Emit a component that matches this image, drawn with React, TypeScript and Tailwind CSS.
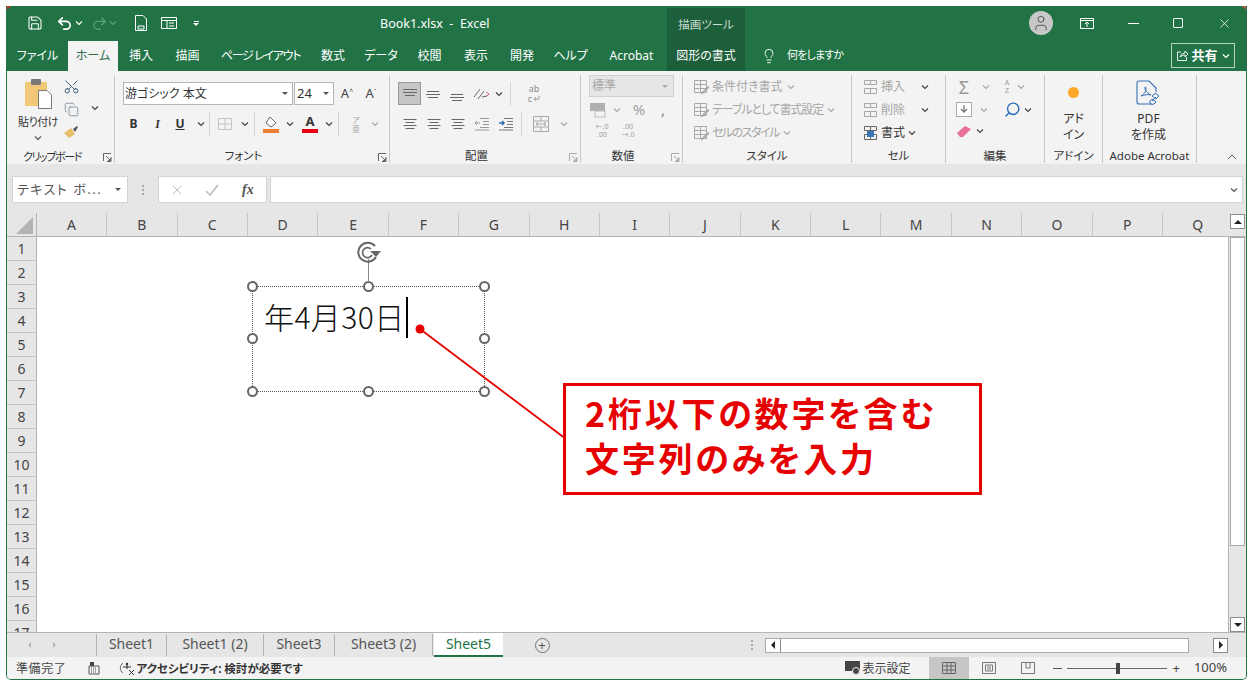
import React from "react";
import { Copy, Lightbulb, Redo2, Save, Scissors, Search, Undo2, User, X } from "lucide-react";

const columns = ["A", "B", "C", "D", "E", "F", "G", "H", "I", "J", "K", "L", "M", "N", "O", "P", "Q"];
const rows = Array.from({ length: 17 }, (_, i) => i + 1);
const topTabs = [
  { label: "ファイル", w: "w-[61px]" },
  { label: "ホーム", w: "w-[50px]", active: true },
  { label: "挿入", w: "w-[46px]" },
  { label: "描画", w: "w-[47px]" },
  { label: "ページ レイアウト", w: "w-[99px]", tight: true },
  { label: "数式", w: "w-[46px]" },
  { label: "データ", w: "w-[50px]" },
  { label: "校閲", w: "w-[47px]" },
  { label: "表示", w: "w-[46px]" },
  { label: "開発", w: "w-[46px]" },
  { label: "ヘルプ", w: "w-[51px]" },
  { label: "Acrobat", w: "w-[71px]" },
];
const sheets = [
  { name: "Sheet1", w: "w-[70px]" },
  { name: "Sheet1 (2)", w: "w-[97px]" },
  { name: "Sheet3", w: "w-[71px]" },
  { name: "Sheet3 (2)", w: "w-[98px]" },
];

function Chev({ className = "text-[#444]" }: { className?: string }) {
  return (
    <svg width="8" height="6" viewBox="0 0 8 6" className={className}>
      <path d="M1 1.5 4 4.5 7 1.5" fill="none" stroke="currentColor" strokeWidth="1.2" />
    </svg>
  );
}

function Lines({ widths, y, color = "#666" }: { widths: number[]; y: number[]; color?: string }) {
  return (
    <svg width="14" height="14" viewBox="0 0 14 14">
      {widths.map((w, i) => (
        <rect key={i} x={(14 - w) / 2} y={y[i]} width={w} height="1" fill={color} />
      ))}
    </svg>
  );
}

function Launcher({ gray }: { gray?: boolean }) {
  const c = gray ? "#aaa" : "#666";
  return (
    <svg width="9" height="9" viewBox="0 0 9 9">
      <path d="M.5 8V.5H8M8 4V8.5H4M3 3 7.5 7.5M5 7.5H7.5V5" fill="none" stroke={c} />
    </svg>
  );
}

function Group({ w, label, children, launcher, gray, labelClass = "text-[11.5px]" }: { w: string; label: string; children: React.ReactNode; launcher?: boolean; gray?: boolean; labelClass?: string }) {
  return (
    <div className={`${w} h-[88px] shrink-0 mt-[4px] border-r border-[#c8c8c8] relative flex flex-col`}>
      <div className="flex-1 min-h-0">{children}</div>
      <div className={`h-[18px] pt-[4px] flex items-center justify-center text-[#333] leading-none whitespace-nowrap ${launcher ? "pr-[17px]" : ""} ${labelClass}`}>{label}</div>
      {launcher && (
        <span className="absolute right-[2px] bottom-[1px] leading-none">
          <Launcher gray={gray} />
        </span>
      )}
    </div>
  );
}

function Sep() {
  return <div className="w-px h-[24px] bg-[#d4d4d4]" />;
}

function Handle({ className }: { className: string }) {
  return <div className={`absolute w-[11px] h-[11px] rounded-full bg-white border-2 border-[#666] ${className}`} />;
}

function GrayRow({ icon, label, chev, tight }: { icon: React.ReactNode; label: string; chev?: boolean; tight?: string }) {
  return (
    <div className="h-[23px] flex items-center gap-[2px] text-[12px] text-[#a6a6a6] whitespace-nowrap">
      {icon}
      <span className={tight}>{label}</span>
      {chev && <Chev className="text-[#aaa] ml-[2px]" />}
    </div>
  );
}

function TableIcon({ color = "#a8a8a8" }: { color?: string }) {
  return (
    <svg width="17" height="16" viewBox="0 0 17 16">
      <path d="M1.5 1.5H13.5V13.5H1.5ZM1.5 5.5H13.5M1.5 9.5H13.5M7.5 1.5V13.5" fill="none" stroke={color} />
      <path d="M8 14 15 7l1.5 1.5-7 6.5H8Z" fill={color} />
    </svg>
  );
}

function CellIcon({ color = "#a8a8a8", mark }: { color?: string; mark?: boolean }) {
  return (
    <svg width="17" height="16" viewBox="0 0 17 16">
      <path d="M2.5 1.5H14.5V5.5H2.5ZM2.5 9.5H14.5V14.5H2.5ZM8.5 1.5V5.5M8.5 9.5V14.5" fill="none" stroke={color} />
      {mark && <rect x="5" y="6" width="7" height="6" fill="#3b77b8" />}
    </svg>
  );
}

function Ribbon() {
  return (
    <div className="h-[93px] bg-[#f3f3f3] flex shrink-0">
      <Group w="w-[108px]" label="クリップボード" launcher labelClass="text-[11px] tracking-[-1.4px]">
        <div className="flex pl-[10px] pt-[3px]">
          <div className="w-[42px] flex flex-col items-center">
            <svg width="29" height="31" viewBox="0 0 29 31">
              <rect x="1" y="4" width="22" height="24" fill="#f0c878" />
              <rect x="7" y="1" width="10" height="6" rx="1" fill="#777" />
              <path d="M14.5 12.5H23L27.5 17V30.5H14.5Z" fill="#fff" stroke="#777" />
            </svg>
            <span className="text-[11px] tracking-[-0.5px] leading-none mt-[7px] whitespace-nowrap text-[#333]">貼り付け</span>
            <Chev className="text-[#555] mt-[8px]" />
          </div>
          <div className="w-[16px] ml-[4px] flex flex-col items-center gap-[7px]">
            <Scissors size={17} strokeWidth={1.4} className="text-[#3f5f80] -rotate-90" />
            <Copy size={15} strokeWidth={1.1} className="text-[#5f7488]" />
            <svg width="16" height="14" viewBox="0 0 16 14" className="mt-[1px]">
              <path d="M1 8 8 3 12 9 6 13Z" fill="#e8bd68" />
              <path d="M10 4 14 1 15 2 12 7Z" fill="#555" />
            </svg>
          </div>
          <div className="ml-[12px] mt-[27px]">
            <Chev />
          </div>
        </div>
      </Group>

      <Group w="w-[275px]" label="フォント" launcher>
        <div className="pl-[8px] pt-[7px]">
          <div className="flex items-center h-[23px]">
            <div className="w-[170px] h-[23px] bg-white border border-[#b5b5b5] flex items-center justify-between pl-[1px] pr-[4px] text-[12px] text-[#333]">
              <span>游ゴシック 本文</span>
              <span className="w-0 h-0 border-x-[3px] border-x-transparent border-t-[3px] border-t-[#555]" />
            </div>
            <div className="w-[40px] ml-[1px] h-[23px] bg-white border border-[#b5b5b5] flex items-center justify-between pl-[2px] pr-[4px] text-[13px] text-[#333]">
              <span>24</span>
              <span className="w-0 h-0 border-x-[3px] border-x-transparent border-t-[3px] border-t-[#555]" />
            </div>
            <span className="w-[24px] ml-[1px] text-center text-[13px] text-[#444]">A<sup className="text-[7px]">^</sup></span>
            <span className="w-[24px] text-center text-[13px] text-[#444]">A<sup className="text-[7px]">ˇ</sup></span>
          </div>
          <div className="flex items-center h-[24px] mt-[7px] text-[#333]">
            <span className="w-[21px] text-center text-[12px] font-bold">B</span>
            <span className="w-[27px] text-center text-[12px] font-bold italic font-['Liberation_Serif',serif]">I</span>
            <span className="w-[18px] text-center text-[12px] font-bold underline">U</span>
            <span className="w-[17px] ml-[3px] flex justify-center"><Chev /></span>
            <span className="w-[6px]"><Sep /></span>
            <span className="w-[20px] flex justify-center">
              <svg width="16" height="14" viewBox="0 0 16 14">
                <path d="M1.5 1.5H14.5V12.5H1.5ZM8 1.5V12.5M1.5 7H14.5" fill="none" stroke="#c4c4c4" />
              </svg>
            </span>
            <span className="w-[19px] flex justify-center"><Chev /></span>
            <span className="w-[7px]"><Sep /></span>
            <span className="w-[20px] flex justify-center">
              <svg width="18" height="17" viewBox="0 0 18 17">
                <path d="M8 1 14 7 9 11 4 7Z" fill="#fff" stroke="#666" />
                <rect x="1" y="13" width="16" height="4" fill="#ed7d31" />
              </svg>
            </span>
            <span className="w-[18px] flex justify-center"><Chev /></span>
            <span className="w-[1px]" />
            <span className="w-[20px] flex flex-col items-center text-[13px] font-bold leading-[13px] text-[#333]">
              A<span className="w-[16px] h-[4px] bg-[#e60012] mt-[1px]" />
            </span>
            <span className="w-[18px] flex justify-center"><Chev /></span>
            <span className="w-[7px]"><Sep /></span>
            <span className="w-[22px] text-center text-[8px] leading-[9px] text-[#aaa]">ア<br />亜</span>
            <span className="w-[16px] flex justify-center"><Chev className="text-[#aaa]" /></span>
          </div>
        </div>
      </Group>

      <Group w="w-[191px]" label="配置" launcher gray>
        <div className="pl-[8px] pt-[7px]">
          <div className="flex items-center h-[23px]">
            <span className="w-[23px] h-[23px] bg-[#c6c6c6] border border-[#9a9a9a] flex items-center justify-center"><Lines widths={[14, 14, 10]} y={[2, 5, 8]} /></span>
            <span className="w-[24px] flex justify-center"><Lines widths={[12, 14, 10]} y={[4, 7, 10]} /></span>
            <span className="w-[24px] flex justify-center"><Lines widths={[12, 14, 10]} y={[7, 10, 13]} /></span>
            <span className="w-[24px] flex justify-center">
              <svg width="18" height="16" viewBox="0 0 18 16">
                <path d="M2 11 8 3M6 13l6-8M10 11l5-1" stroke="#666" fill="none" />
                <path d="M14 6l3 2-2 2" stroke="#c05a9a" fill="none" />
              </svg>
            </span>
            <span className="w-[12px] flex justify-center"><Chev /></span>
            <span className="w-[14px] ml-[5px]"><Sep /></span>
            <span className="w-[30px] -ml-[5px] flex flex-col items-center text-[9px] leading-[10px] text-[#888]">
              <span>ab</span>
              <span className="flex items-center gap-[1px]">
                c
                <svg width="7" height="6" viewBox="0 0 7 6"><path d="M6 0V3H1M3 1 1 3 3 5" fill="none" stroke="#888" strokeWidth=".8" /></svg>
              </span>
            </span>
          </div>
          <div className="flex items-center h-[24px] mt-[7px]">
            <span className="w-[24px] flex justify-center"><Lines widths={[13, 9, 13, 9]} y={[2, 5, 8, 11]} /></span>
            <span className="w-[24px] flex justify-center"><Lines widths={[13, 9, 13, 9]} y={[2, 5, 8, 11]} /></span>
            <span className="w-[24px] flex justify-center"><Lines widths={[13, 9, 13, 9]} y={[2, 5, 8, 11]} /></span>
            <span className="w-[24px] flex justify-center">
              <svg width="16" height="14" viewBox="0 0 16 14"><path d="M6 1.5H15M9 4.5H15M9 7.5H15M6 10.5H15M1 13H15M1 6H6M3 4 1 6 3 8" fill="none" stroke="#999" /></svg>
            </span>
            <span className="w-[24px] flex justify-center">
              <svg width="16" height="14" viewBox="0 0 16 14"><path d="M6 1.5H15M9 4.5H15M9 7.5H15M6 10.5H15M1 13H15" fill="none" stroke="#777" /><path d="M1 6H6M4 4 6 6 4 8" fill="none" stroke="#2f6db5" strokeWidth="1.5" /></svg>
            </span>
            <span className="w-[9px] ml-[3px]"><Sep /></span>
            <span className="w-[22px] flex justify-center">
              <svg width="16" height="16" viewBox="0 0 16 16"><path d="M.5.5H15.5V15.5H.5ZM.5 5H15.5M.5 11H15.5M8 .5V5M8 11V15.5M3 8H13M5 6 3 8 5 10M11 6l2 2-2 2" fill="none" stroke="#a8a8a8" /></svg>
            </span>
            <span className="w-[23px] flex justify-center"><Chev className="text-[#aaa]" /></span>
          </div>
        </div>
      </Group>

      <Group w="w-[102px]" label="数値" launcher gray>
        <div className="pl-[8px]">
          <div className="w-[85px] h-[22px] bg-[#e6e6e6] border border-[#d0d0d0] flex items-center justify-between pl-[2px] pr-[5px] text-[12px] text-[#a6a6a6]">
            <span>標準</span>
            <span className="w-0 h-0 border-x-[3px] border-x-transparent border-t-[3px] border-t-[#aaa]" />
          </div>
          <div className="flex items-center h-[23px] mt-[1px]">
            <svg width="18" height="16" viewBox="0 0 18 16"><rect x="1" y="1" width="15" height="8" fill="#b0b0b0" /><rect x="6" y="9" width="10" height="6" fill="none" stroke="#bbb" /></svg>
            <span className="w-[20px] flex justify-center"><Chev className="text-[#aaa]" /></span>
            <span className="w-[24px] text-center text-[15px] text-[#a0a0a0] leading-none">%</span>
            <span className="w-[24px] text-center text-[14px] font-bold text-[#a0a0a0] leading-none">,</span>
          </div>
          <div className="flex items-start h-[20px] mt-[2px] text-[7px] leading-[8px] text-[#a0a0a0] text-center">
            <span className="w-[26px]">←.0<br />.00</span>
            <span className="w-[26px]">.00<br />→.0</span>
          </div>
        </div>
      </Group>

      <Group w="w-[169px]" label="スタイル">
        <div className="pl-[10px]">
          <GrayRow icon={<TableIcon />} label="条件付き書式" chev />
          <GrayRow icon={<TableIcon />} label="テーブルとして書式設定" chev tight="tracking-[-1.1px]" />
          <GrayRow icon={<TableIcon />} label="セルのスタイル" chev tight="tracking-[-1.5px]" />
        </div>
      </Group>

      <Group w="w-[94px]" label="セル">
        <div className="pl-[10px]">
          <div className="flex items-center">
            <div className="w-[59px]"><GrayRow icon={<CellIcon />} label="挿入" /></div>
            <Chev />
          </div>
          <div className="flex items-center">
            <div className="w-[59px]"><GrayRow icon={<CellIcon />} label="削除" /></div>
            <Chev />
          </div>
          <div className="h-[23px] flex items-center gap-[2px] text-[12px] text-[#333]">
            <CellIcon color="#666" mark />
            <span>書式</span>
            <Chev className="text-[#444] ml-[1px]" />
          </div>
        </div>
      </Group>

      <Group w="w-[99px]" label="編集">
        <div className="pl-[10px]">
          <div className="h-[23px] flex items-center">
            <span className="w-[16px] text-[18px] leading-none text-[#999] text-center">Σ</span>
            <span className="w-[28px] flex justify-center"><Chev className="text-[#aaa]" /></span>
            <span className="w-[14px] flex flex-col items-center text-[7px] leading-[8px] text-[#999]">
              <span>A</span>
              <span>Z</span>
            </span>
            <span className="w-[14px] flex justify-center"><Chev className="text-[#aaa]" /></span>
          </div>
          <div className="h-[23px] flex items-center">
            <svg width="16" height="15" viewBox="0 0 16 15"><rect x=".5" y=".5" width="15" height="14" fill="#fff" stroke="#aaa" /><path d="M8 3V10M5 7l3 3 3-3" fill="none" stroke="#777" strokeWidth="1.3" /></svg>
            <span className="w-[24px] flex justify-center"><Chev className="text-[#aaa]" /></span>
            <Search size={17} strokeWidth={2} className="text-[#2e6fb7] -scale-x-100 ml-[8px]" />
            <span className="ml-[3px]"><Chev /></span>
          </div>
          <div className="h-[23px] flex items-center -mt-[2px]">
            <svg width="16" height="14" viewBox="0 0 16 14"><path d="M1 9 9 2 15 5 7 13H4Z" fill="#e8719a" /></svg>
            <span className="ml-[4px]"><Chev /></span>
          </div>
        </div>
      </Group>

      <Group w="w-[58px]" label="アドイン">
        <div className="flex flex-col items-center pt-[12px]">
          <span className="w-[11px] h-[11px] rounded-full bg-[#ffa726]" />
          <span className="text-[12px] leading-[16px] mt-[13px] text-[#333] text-center">アド<br />イン</span>
        </div>
      </Group>

      <Group w="w-[94px]" label="Adobe Acrobat">
        <div className="flex flex-col items-center pt-[5px] pr-[2px]">
          <svg width="28" height="28" viewBox="0 0 28 28">
            <path d="M17 24H4Q2 24 2 22V3Q2 1 4 1H14L21 8V12" fill="none" stroke="#3470b5" strokeWidth="1.1" />
            <path d="M6 16C10 14 12 9 10.500 7 9 7 10 12 16 15 13 14 9 15 6 16Z" fill="none" stroke="#3470b5" />
            <path d="M17 21 21 17M15 23a3 3 0 0 0 4 1l2-2-4-3-2 2Q14 22 15 23ZM23 15a3 3 0 0 0-4-1l-2 2 4 3 2-2Q24 16 23 15Z" fill="none" stroke="#3470b5" />
          </svg>
          <span className="text-[12px] leading-[16px] mt-[3px] text-[#333] text-center">PDF<br />を作成</span>
        </div>
      </Group>

      <div className="flex-1 flex items-end justify-end pr-[9px] pb-[4px]">
        <svg width="10" height="6" viewBox="0 0 10 6"><path d="M1 5 5 1 9 5" fill="none" stroke="#555" /></svg>
      </div>
    </div>
  );
}

export default function App() {
  return (
    <div className="w-[1253px] h-[686px] bg-white pt-[6px] px-[6px] overflow-hidden font-['Noto_Sans','Noto_Sans_CJK_JP',sans-serif] [font-feature-settings:'palt']">
      <div className="w-[1241px] h-[674px] relative flex flex-col overflow-hidden rounded-b-[5px] border-x border-b border-[#217346] bg-[#e6e6e6]">
        {/* title bar */}
        <div className="h-[34px] bg-[#217346] flex items-center text-white shrink-0 relative">
          <span className="absolute left-0 top-0 w-0 h-0 border-r-[4px] border-r-transparent border-t-[4px] border-t-[#c0392b]" />
          <span className="absolute right-0 top-0 w-0 h-0 border-l-[4px] border-l-transparent border-t-[4px] border-t-[#b5584a]" />
          <div className="flex items-center pl-[20px] w-[370px]">
            <Save size={16} strokeWidth={1.6} />
            <Undo2 size={17} strokeWidth={2.4} className="ml-[13px]" />
            <span className="ml-[2px]"><Chev className="text-white" /></span>
            <Redo2 size={17} strokeWidth={2} className="ml-[8px] text-[#5e9d7c]" />
            <span className="ml-[1px]"><Chev className="text-[#5e9d7c]" /></span>
            <svg width="14" height="16" viewBox="0 0 14 16" className="ml-[17px]"><path d="M1.500.5H9L12.500 4V15.500H1.500ZM4 11H10V14H4Z" fill="none" stroke="#fff" /></svg>
            <svg width="16" height="14" viewBox="0 0 16 14" className="ml-[13px]"><path d="M.5 1.500H15.500V12.500H.5ZM.5 4.500H15.500M6 4.500V12.500M8 7H13M8 10H13" fill="none" stroke="#fff" /></svg>
            <span className="ml-[16px] flex flex-col items-center gap-[1px]"><span className="w-[5px] h-px bg-white" /><span className="w-0 h-0 border-x-[3px] border-x-transparent border-t-[3px] border-t-white" /></span>
          </div>
          <span className="text-[12.5px] ml-[3px] pt-[3px]">Book1.xlsx&nbsp; - &nbsp;Excel</span>
          <div className="absolute left-[660px] top-[2px] w-[78px] h-[32px] pt-[2px] bg-[#1e5f3b] flex items-center justify-center text-[11.5px] text-[#c9ddd0]">描画ツール</div>
          <div className="ml-auto flex items-center">
            <span className="w-[24px] h-[24px] rounded-full bg-[#c8c8c8] flex items-center justify-center text-[#555]"><User size={18} strokeWidth={1.3} /></span>
            <svg width="14" height="11" viewBox="0 0 14 11" className="ml-[27px]"><path d="M.5.5H13.500V10.500H.5ZM.5 2.500H13.500M7 9V4.500M5 6 7 4 9 6" fill="none" stroke="#fff" /></svg>
            <span className="w-[11px] h-px bg-white ml-[34px]" />
            <span className="w-[10px] h-[10px] border border-white rounded-[1px] ml-[34px]" />
            <X size={15} strokeWidth={1.2} className="ml-[34px] mr-[14px]" />
          </div>
        </div>

        {/* tab row */}
        <div className="h-[31px] bg-[#217346] flex items-stretch text-white text-[12px] shrink-0 relative">
          {topTabs.map((t) => (
            <div key={t.label} className={`${t.w} flex items-center justify-center whitespace-nowrap ${t.active ? "bg-[#f3f3f3] text-[#2f6b4a] mt-[1px]" : ""} ${t.tight ? "tracking-[-1.3px]" : ""}`}>
              {t.label}
            </div>
          ))}
          <div className="w-[78px] bg-[#1e5f3b] flex items-center justify-center">図形の書式</div>
          <div className="flex items-center ml-[16px] gap-[10px]">
            <Lightbulb size={16} strokeWidth={1.4} />
            <span className="text-[11px] tracking-[-0.8px]">何をしますか</span>
          </div>
          <div className="ml-auto mr-[11px] my-[3px] w-[64px] border border-[#b9d3c3] flex items-center justify-center gap-[2px] text-[13px] font-bold">
            <svg width="13" height="13" viewBox="0 0 13 13"><path d="M5 3H1.500V11.500H10.500V8M4 8Q5 4 9 4V2L12 5 9 8V6Q6 6 4 8Z" fill="none" stroke="#fff" strokeWidth=".9" /></svg>
            共有
            <Chev className="text-white ml-[2px]" />
          </div>
        </div>

        <Ribbon />

        {/* formula bar */}
        <div className="h-[44px] bg-[#e6e6e6] flex items-end pb-[5px] pl-[5px] shrink-0">
          <div className="w-[116px] h-[27px] bg-white border border-[#d4d4d4] flex items-center justify-between pl-[4px] pr-[6px] text-[13px] text-[#555] tracking-[1.5px] whitespace-nowrap">
            <span>テキスト ボ...</span>
            <span className="w-0 h-0 border-x-[3px] border-x-transparent border-t-[3px] border-t-[#555]" />
          </div>
          <div className="w-[30px] h-[27px] flex flex-col items-center justify-center gap-[2px]">
            <span className="w-[2px] h-[2px] bg-[#aaa]" />
            <span className="w-[2px] h-[2px] bg-[#aaa]" />
            <span className="w-[2px] h-[2px] bg-[#aaa]" />
          </div>
          <div className="w-[109px] h-[27px] bg-white border border-[#d4d4d4] flex items-center text-[#aaa]">
            <X size={16} strokeWidth={1.2} className="ml-[10px]" />
            <svg width="14" height="12" viewBox="0 0 14 12" className="ml-[20px]"><path d="M1 7 5 11 13 1" fill="none" stroke="#b8b8b8" strokeWidth="1.5" /></svg>
            <span className="ml-[23px] text-[14px] italic font-bold font-['Liberation_Serif',serif] text-[#555]">fx</span>
          </div>
          <div className="ml-[3px] w-[973px] h-[27px] bg-white border border-[#d4d4d4] flex items-center justify-end pr-[4px]">
            <Chev className="text-[#555]" />
          </div>
        </div>

        {/* column headers */}
        <div className="h-[24px] bg-[#e6e6e6] flex shrink-0 border-b border-[#b4b4b4] mt-[5px] relative">
          <div className="w-[29.800px] shrink-0 border-r border-[#b4b4b4] flex items-end justify-end pb-[2px] pr-[3px]">
            <span className="w-0 h-0 border-l-[17px] border-l-transparent border-b-[17px] border-b-[#b4b4b4]" />
          </div>
          {columns.map((c) => (
            <div key={c} className="w-[70.400px] shrink-0 border-r border-[#c6c6c6] flex items-center justify-center text-[14px] text-[#444]">
              {c}
            </div>
          ))}
          <div className="absolute right-0 top-0 bottom-0 w-[18px] bg-[#e6e6e6] border-l border-[#e6e6e6] flex items-start justify-center">
            <div className="w-[15px] h-[15px] mt-[1px] bg-white border border-[#8c8c8c] flex items-center justify-center">
              <span className="w-0 h-0 border-x-[4px] border-x-transparent border-b-[4px] border-b-[#222]" />
            </div>
          </div>
        </div>

        {/* sheet */}
        <div className="flex-1 min-h-0 flex relative">
          <div className="w-[30px] shrink-0 overflow-hidden bg-[#e6e6e6] border-r border-[#b4b4b4]">
            {rows.map((r) => (
              <div key={r} className="h-[24px] border-b border-[#c6c6c6] flex items-center justify-center text-[14px] text-[#444]">
                {r}
              </div>
            ))}
          </div>
          <div className="flex-1 bg-white" />
          <div className="w-[18px] shrink-0 bg-[#e6e6e6] border-l border-[#b4b4b4] flex flex-col items-center">
            <div className="w-[15px] h-[309px] bg-white border border-[#a8a8a8]" />
            <div className="mt-auto w-[15px] h-[15px] bg-white border border-[#8c8c8c] flex items-center justify-center">
              <span className="w-0 h-0 border-x-[4px] border-x-transparent border-t-[4px] border-t-[#222]" />
            </div>
          </div>

          {/* shape on the sheet */}
          <div className="absolute left-[245px] top-[49px] w-[233px] h-[106px] border border-dotted border-[#555]">
            <div className="absolute left-[11px] top-[7px] text-[30px] leading-[44px] font-light tracking-[0.4px] text-[#111] whitespace-nowrap font-['Noto_Sans_CJK_JP',sans-serif] [font-feature-settings:'normal']">年4月30日</div>
            <div className="absolute left-[153px] top-[10px] w-[1.500px] h-[41px] bg-black" />
            <Handle className="-left-[6px] -top-[6px]" />
            <Handle className="left-[110px] -top-[6px]" />
            <Handle className="-right-[6px] -top-[6px]" />
            <Handle className="-left-[6px] top-[46px]" />
            <Handle className="-right-[6px] top-[46px]" />
            <Handle className="-left-[6px] -bottom-[6px]" />
            <Handle className="left-[110px] -bottom-[6px]" />
            <Handle className="-right-[6px] -bottom-[6px]" />
            <div className="absolute left-[115px] -top-[28px] w-px h-[23px] bg-[#888]" />
            <svg width="28" height="24" viewBox="0 0 28 24" className="absolute left-[102px] -top-[46px]">
              <path d="M21 16A9.500 9.500 0 1 1 20 5" fill="none" stroke="#666" strokeWidth="2" />
              <path d="M17 14A5 5 0 1 1 16 8" fill="none" stroke="#666" strokeWidth="1.6" />
              <path d="M15 10H26L21 16Z" fill="#666" />
            </svg>
          </div>
          <svg width="160" height="125" viewBox="0 0 160 125" className="absolute left-[408px] top-[87px] overflow-visible">
            <circle cx="5" cy="5" r="4.500" fill="#e60000" />
            <path d="M5 5 151 115" stroke="#e60000" strokeWidth="1.800" fill="none" />
          </svg>
          <div className="absolute left-[556px] top-[146px] w-[419px] h-[112px] bg-white border-[3px] border-[#e60000] pl-[19px] pt-[4px] text-[#e60000] text-[34px] leading-[45px] font-bold tracking-[2.800px] whitespace-nowrap font-['Noto_Sans_CJK_JP',sans-serif] [font-feature-settings:'normal']">
            <div>2桁以下の数字を含む</div>
            <div>文字列のみを入力</div>
          </div>
        </div>

        {/* sheet tabs */}
        <div className="h-[25px] bg-[#e6e6e6] border-t border-[#b4b4b4] flex items-stretch shrink-0 text-[14px] text-[#555]">
          <div className="w-[90px] flex items-center pl-[21px] gap-[22px] border-r border-[#b4b4b4] my-[1px]">
            <span className="w-0 h-0 border-y-[3px] border-y-transparent border-r-[3px] border-r-[#b4b4b4]" />
            <span className="w-0 h-0 border-y-[3px] border-y-transparent border-l-[3px] border-l-[#b4b4b4]" />
          </div>
          {sheets.map((s) => (
            <div key={s.name} className={`${s.w} flex items-center justify-center border-r border-[#b4b4b4] my-[1px] pb-[3px] whitespace-nowrap`}>
              {s.name}
            </div>
          ))}
          <div className="w-[69px] ml-px bg-white border-b-2 border-[#217346] text-[#217346] flex items-center justify-center pb-[2px]">Sheet5</div>
          <div className="w-[78px] flex items-center justify-center">
            <span className="w-[15px] h-[15px] rounded-full border border-[#777] flex items-center justify-center text-[13px] leading-none">+</span>
          </div>
          <div className="ml-auto flex items-center pr-[18px]">
            <div className="flex flex-col gap-[2px] mr-[12px]">
              <span className="w-[2px] h-[2px] bg-[#aaa]" />
              <span className="w-[2px] h-[2px] bg-[#aaa]" />
              <span className="w-[2px] h-[2px] bg-[#aaa]" />
            </div>
            <div className="w-[424px] h-[15px] bg-white border border-[#a8a8a8] flex">
              <span className="w-[15px] border-r border-[#8c8c8c] flex items-center justify-center">
                <span className="w-0 h-0 border-y-[4px] border-y-transparent border-r-[4px] border-r-[#222]" />
              </span>
            </div>
            <div className="w-[24px]" />
            <div className="w-[15px] h-[15px] bg-white border border-[#8c8c8c] flex items-center justify-center">
              <span className="w-0 h-0 border-y-[4px] border-y-transparent border-l-[4px] border-l-[#222]" />
            </div>
          </div>
        </div>

        {/* status bar */}
        <div className="h-[22px] bg-[#f3f3f3] flex items-center shrink-0 text-[12px] text-[#444]">
          <span className="ml-[9px] pt-[2px] tracking-[0.6px]">準備完了</span>
          <svg width="12" height="13" viewBox="0 0 12 13" className="ml-[22px]"><path d="M1 4H11V12H1Z" fill="none" stroke="#555" /><rect x="2" y="0" width="4" height="4" fill="#444" /><path d="M3 6H9M3 8H9M3 10H9" stroke="#555" strokeDasharray="1 1" /></svg>
          <svg width="16" height="14" viewBox="0 0 16 14" className="ml-[19px]"><path d="M4 2a6 6 0 0 0 0 10" fill="none" stroke="#666" /><circle cx="8" cy="3" r="1.300" fill="#333" /><path d="M4 6H12M8 4V8M10 9 15 14M15 9 10 14" stroke="#333" fill="none" /></svg>
          <span className="ml-[1px] pt-[2px] font-bold text-[11.500px] text-[#333]">アクセシビリティ: 検討が必要です</span>
          <div className="ml-auto flex items-stretch h-full">
            <div className="flex items-center mr-[19px]">
              <svg width="16" height="14" viewBox="0 0 16 14"><rect x="0" y="0" width="15" height="10" fill="#444" /><circle cx="11" cy="10" r="3.500" fill="#444" stroke="#f3f3f3" /></svg>
              <span className="ml-[1px] pt-[2px]">表示設定</span>
            </div>
            <div className="w-[40px] bg-[#c6c6c6] flex items-center justify-center">
              <svg width="14" height="12" viewBox="0 0 14 12"><path d="M.5.5H13.500V11.500H.5ZM.5 4H13.500M.5 8H13.500M5 .5V11.500M9 .5V11.500" fill="none" stroke="#666" /></svg>
            </div>
            <div className="w-[40px] flex items-center justify-center">
              <svg width="14" height="12" viewBox="0 0 14 12"><path d="M.5.5H13.500V11.500H.5ZM3.500 3H10.500V9H3.500ZM5 5H9M5 7H9" fill="none" stroke="#777" /></svg>
            </div>
            <div className="w-[38px] flex items-center justify-center">
              <svg width="14" height="12" viewBox="0 0 14 12"><path d="M.5.5H13.500V11.500H.5ZM5 .5V6H9V.5" fill="none" stroke="#777" /></svg>
            </div>
            <div className="flex items-center ml-[6px] pr-[19px]">
              <span className="w-[9px] h-px bg-[#555]" />
              <div className="relative w-[100px] h-px bg-[#666] ml-[5px]">
                <span className="absolute left-[49px] -top-[5px] w-[4px] h-[11px] bg-[#444]" />
              </div>
              <span className="ml-[5px] text-[13px] leading-none">+</span>
              <span className="ml-[14px] text-[13px]">100%</span>
            </div>
          </div>
        </div>
      </div>
    </div>
  );
}
